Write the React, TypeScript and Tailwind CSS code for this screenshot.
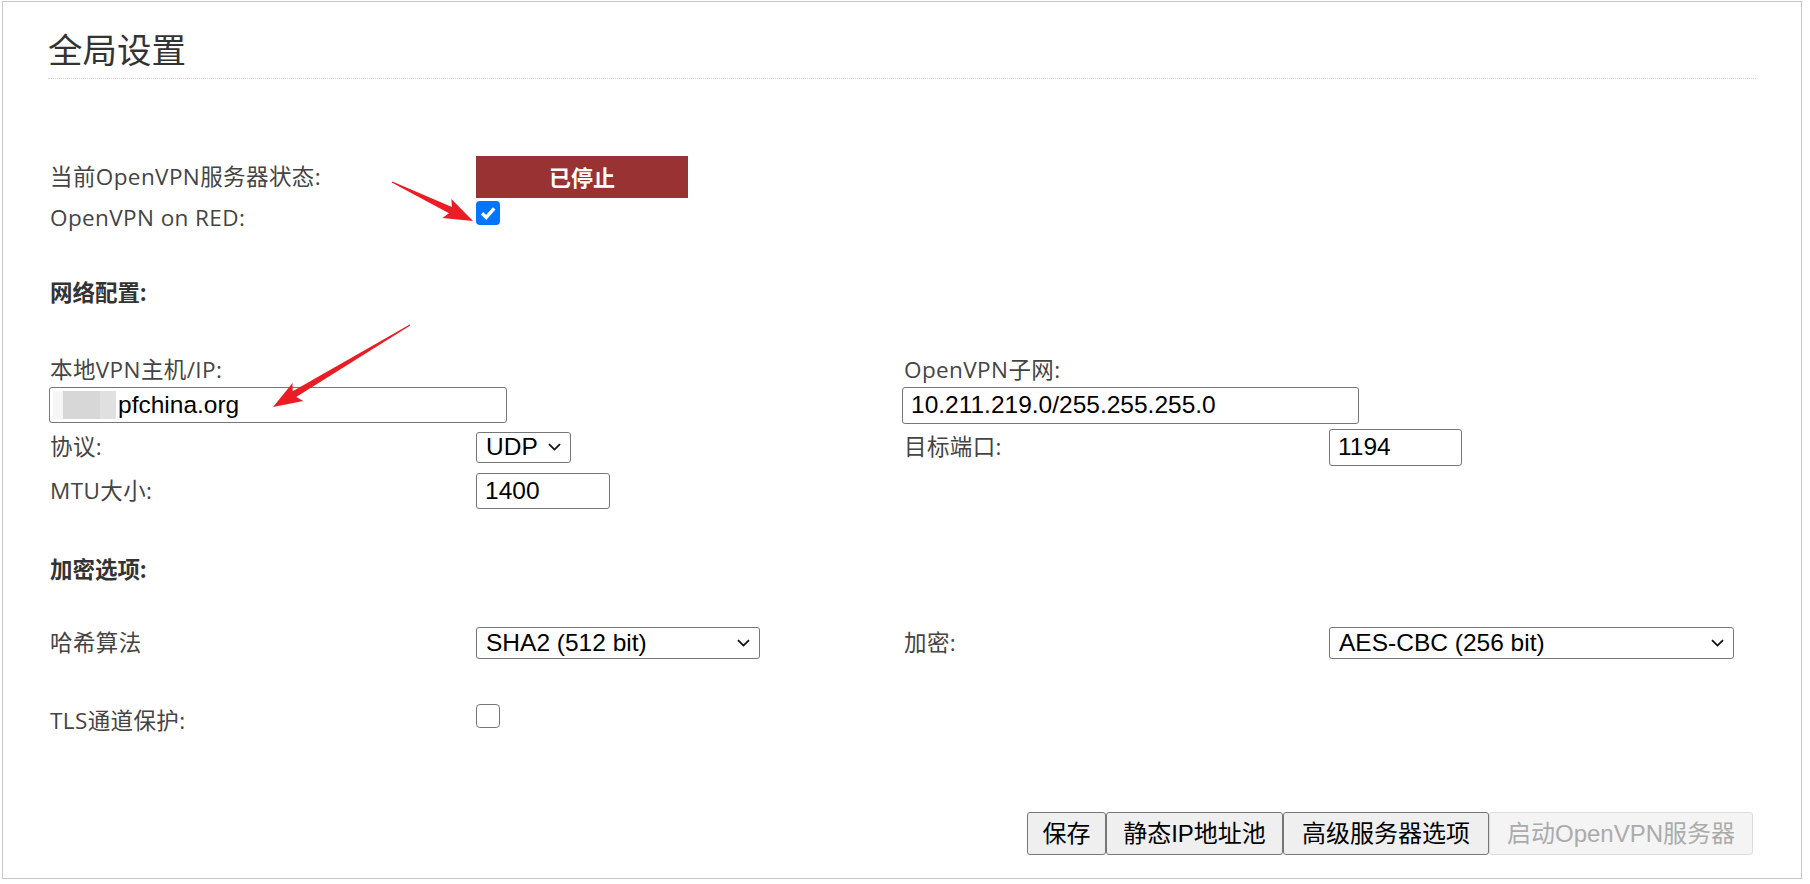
import React from "react";

const LABEL_FONT = "font-['Open_Sans','Noto_Sans_CJK_SC',sans-serif]";
const FIELD_FONT = "font-['Liberation_Sans','Noto_Sans_CJK_SC',sans-serif]";

function arrowPoints(tx: number, ty: number, px: number, py: number) {
  const dx = px - tx;
  const dy = py - ty;
  const L = Math.hypot(dx, dy);
  const ux = dx / L;
  const uy = dy / L;
  const nx = -uy;
  const ny = ux;
  const headLen = 25;
  const headW = 10.5;
  const neckW = 3.4;
  const tailW = 0.6;
  const hx = px - ux * headLen;
  const hy = py - uy * headLen;
  const wx = hx - ux * 4;
  const wy = hy - uy * 4;
  const pts: [number, number][] = [
    [tx + nx * tailW, ty + ny * tailW],
    [hx + nx * neckW, hy + ny * neckW],
    [wx + nx * headW, wy + ny * headW],
    [px, py],
    [wx - nx * headW, wy - ny * headW],
    [hx - nx * neckW, hy - ny * neckW],
    [tx - nx * tailW, ty - ny * tailW],
  ];
  return pts.map((p) => `${p[0].toFixed(1)},${p[1].toFixed(1)}`).join(" ");
}

function Chevron() {
  return (
    <svg width="13" height="8" viewBox="0 0 13 8" className="shrink-0">
      <path d="M1 1.2 L6.5 6.6 L12 1.2" fill="none" stroke="#111" strokeWidth="1.8" />
    </svg>
  );
}

function Select({ value, w, h }: { value: string; w: string; h: string }) {
  return (
    <div
      className={`${w} ${h} ${FIELD_FONT} flex items-center justify-between border border-[#767676] rounded-[3px] bg-white pl-[9px] pr-[9px] text-[24.5px] text-black leading-none`}
    >
      <span>{value}</span>
      <Chevron />
    </div>
  );
}

function TextInput({ value, w, h }: { value: string; w: string; h: string }) {
  return (
    <div
      className={`${w} ${h} ${FIELD_FONT} flex items-center border border-[#767676] rounded-[3px] bg-white pl-[8px] text-[24.5px] text-black leading-none`}
    >
      {value}
    </div>
  );
}

function CheckedBox() {
  return (
    <div className="w-[24px] h-[24px] rounded-[4px] bg-[#0075ff] flex items-center justify-center">
      <svg width="18" height="18" viewBox="0 0 18 18">
        <path d="M3 9.2 L7.2 13.4 L15.2 4.4" fill="none" stroke="#fff" strokeWidth="3.4" />
      </svg>
    </div>
  );
}

function UncheckedBox() {
  return <div className="w-[24px] h-[24px] rounded-[4px] border-[1.5px] border-[#767676] bg-white" />;
}

const label = "text-[22.5px] tracking-[0.4px] leading-[30px] text-[#444]";
const head = "text-[22.5px] leading-[30px] font-bold text-[#333]";

export default function App() {
  return (
    <div className={`relative w-[1810px] h-[884px] bg-white overflow-hidden ${LABEL_FONT}`}>
      <div className="ml-[2px] mt-[1px] w-[1800px] h-[878px] border border-[#c8c8c8] px-[45px]">
        <div className="pt-[30px] pb-[10px] border-b border-dotted border-[#d4d4d4]">
          <h1 className="text-[34.5px] leading-[36px] text-[#333] font-normal">全局设置</h1>
        </div>

        <div className="pl-[2px]">
          <div className="mt-[77px] flex h-[42px] items-center">
            <div className={`w-[426px] ${label}`}>当前OpenVPN服务器状态:</div>
            <div className="w-[212px] h-[42px] bg-[#993333] text-white font-bold text-[22px] flex items-center justify-center">
              已停止
            </div>
          </div>
          <div className="flex h-[39px] items-center">
            <div className={`w-[426px] ${label}`}>OpenVPN on RED:</div>
            <div className="self-start mt-[3px]">
              <CheckedBox />
            </div>
          </div>

          <div className={`mt-[41px] ${head}`}>网络配置:</div>

          <div className="mt-[47px] flex">
            <div className={`w-[854px] ${label}`}>本地VPN主机/IP:</div>
            <div className={label}>OpenVPN子网:</div>
          </div>
          <div className="mt-[2px] flex">
            <div className="w-[854px]">
              <div
                className={`-ml-[1px] w-[458px] h-[36px] ${FIELD_FONT} flex items-center border border-[#767676] rounded-[3px] bg-white pl-[3px] text-[24.5px] text-black leading-none`}
              >
                <span className="flex h-[28px]">
                  <span className="w-[10px] bg-[#f6f6f6]" />
                  <span className="w-[37px] bg-[#d7d7d7]" />
                  <span className="w-[16px] bg-[#e0e0e0]" />
                </span>
                <span className="ml-[2px]">pfchina.org</span>
              </div>
            </div>
            <div className="-ml-[2px]">
              <TextInput value="10.211.219.0/255.255.255.0" w="w-[457px]" h="h-[37px]" />
            </div>
          </div>

          <div className="mt-[5px] flex h-[36px] items-center">
            <div className={`w-[426px] ${label}`}>协议:</div>
            <div className="w-[428px]">
              <Select value="UDP" w="w-[95px]" h="h-[31px]" />
            </div>
            <div className={`w-[425px] ${label}`}>目标端口:</div>
            <TextInput value="1194" w="w-[133px]" h="h-[37px]" />
          </div>

          <div className="mt-[8px] flex h-[36px] items-center">
            <div className={`w-[426px] ${label}`}>MTU大小:</div>
            <TextInput value="1400" w="w-[134px]" h="h-[36px]" />
          </div>

          <div className={`mt-[46px] ${head}`}>加密选项:</div>

          <div className="mt-[42px] flex h-[32px] items-center">
            <div className={`w-[426px] ${label}`}>哈希算法</div>
            <div className="w-[428px]">
              <Select value="SHA2 (512 bit)" w="w-[284px]" h="h-[32px]" />
            </div>
            <div className={`w-[425px] ${label}`}>加密:</div>
            <Select value="AES-CBC (256 bit)" w="w-[405px]" h="h-[32px]" />
          </div>

          <div className="mt-[44px] flex h-[36px] items-center">
            <div className={`w-[426px] ${label}`}>TLS通道保护:</div>
            <div className="self-start mt-[1px]">
              <UncheckedBox />
            </div>
          </div>
        </div>

        <div className={`mt-[73px] mr-[3px] flex justify-end ${FIELD_FONT} text-[24px]`}>
          <button className="w-[79px] h-[43px] border border-[#767676] rounded-[3px] bg-[#efefef] text-black">保存</button>
          <button className="w-[177px] h-[43px] border border-[#767676] rounded-[3px] bg-[#efefef] text-black">静态IP地址池</button>
          <button className="w-[206px] h-[43px] border border-[#767676] rounded-[3px] bg-[#efefef] text-black">高级服务器选项</button>
          <button className="w-[264px] h-[43px] border border-[#dcdcdc] rounded-[3px] bg-[#f4f4f4] text-[#ababab] whitespace-nowrap">启动OpenVPN服务器</button>
        </div>
      </div>

      <svg className="absolute left-0 top-0 pointer-events-none" width="1810" height="884">
        <polygon points={arrowPoints(392, 182, 473, 221)} fill="#ea1d25" />
        <polygon points={arrowPoints(410, 325, 273, 407)} fill="#ea1d25" />
      </svg>
    </div>
  );
}
